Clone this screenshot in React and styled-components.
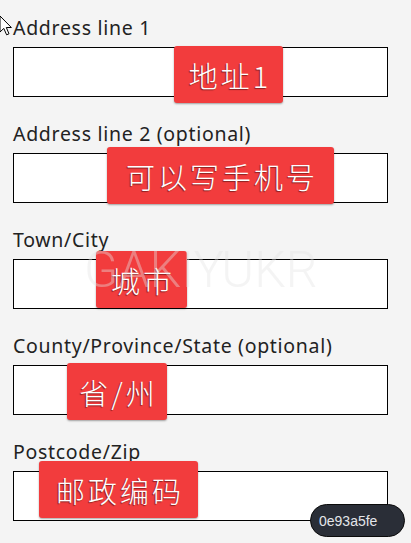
import styled, { createGlobalStyle } from "styled-components";

const GlobalStyle = createGlobalStyle`
  html, body {
    margin: 0;
    padding: 0;
    background: #f4f4f4;
  }
`;

const fields = [
  { label: "Address line 1", tag: "地址1", pos: { left: 161, top: -1, width: 109 } },
  { label: "Address line 2 (optional)", tag: "可以写手机号", pos: { left: 94, top: -6, width: 227 } },
  { label: "Town/City", tag: "城市", pos: { left: 83, top: -8, width: 91 } },
  { label: "County/Province/State (optional)", tag: "省/州", pos: { left: 54, top: -2, width: 100 } },
  { label: "Postcode/Zip", tag: "邮政编码", pos: { left: 26, top: -10, width: 159 } },
];

export default function App() {
  return (
    <Page>
      <GlobalStyle />
      <Cursor width="14" height="22" viewBox="0 0 14 22">
        <path
          d="M1 1 L1 17 L4.8 13.4 L7.6 19.8 L10 18.8 L7.3 12.5 L12.4 12.5 Z"
          fill="#fff"
          stroke="#000"
          strokeWidth="1"
          strokeLinejoin="round"
        />
      </Cursor>
      <Form>
        {fields.map((f) => (
          <Field key={f.label}>
            <Label>{f.label}</Label>
            <InputWrap>
              <Input type="text" />
              <Tag style={f.pos}>{f.tag}</Tag>
            </InputWrap>
          </Field>
        ))}
      </Form>
      <Watermark>GAKIYUKR</Watermark>
      <Hash>0e93a5fe</Hash>
    </Page>
  );
}

const Page = styled.div`
  position: relative;
  width: 411px;
  height: 543px;
  overflow: hidden;
  background: #f4f4f4;
`;

const Form = styled.form`
  display: flex;
  flex-direction: column;
  gap: 22px;
  width: 375px;
  padding: 13px 0 0 13px;
`;

const Field = styled.div`
  display: flex;
  flex-direction: column;
`;

const Label = styled.label`
  font-family: "Noto Sans", "Open Sans", sans-serif;
  font-size: 19.5px;
  letter-spacing: 0.7px;
  line-height: 30px;
  color: #222;
  margin-bottom: 4px;
  white-space: nowrap;
`;

const InputWrap = styled.div`
  position: relative;
`;

const Input = styled.input`
  box-sizing: border-box;
  display: block;
  width: 375px;
  height: 50px;
  margin: 0;
  border: 1px solid #000;
  border-radius: 0;
  background: #fff;
  outline: none;
`;

const Tag = styled.div`
  position: absolute;
  height: 57px;
  display: flex;
  align-items: center;
  justify-content: center;
  background: #f23c3d;
  border-radius: 3px;
  box-shadow: 0 1px 2px rgba(0, 0, 0, 0.35);
  color: #fff;
  font-family: "Noto Sans CJK SC", "Noto Sans", sans-serif;
  font-weight: 300;
  font-size: 29px;
  letter-spacing: 3px;
  text-indent: 3px;
  text-shadow: -1px 1px 1px rgba(0, 0, 0, 0.45);
  white-space: nowrap;
`;

const Watermark = styled.div`
  position: absolute;
  left: 84px;
  top: 240px;
  font-family: Roboto, "Liberation Sans", sans-serif;
  font-weight: 300;
  font-size: 50px;
  line-height: 60px;
  color: rgba(228, 228, 228, 0.4);
  pointer-events: none;
`;

const Hash = styled.div`
  position: absolute;
  left: 310px;
  top: 504px;
  box-sizing: border-box;
  width: 95px;
  height: 33px;
  padding-left: 8px;
  display: flex;
  align-items: center;
  background: #2a2e37;
  border: 1.5px solid #0b0b0b;
  border-radius: 17px;
  color: #e4e6ea;
  font-family: "Liberation Sans", Arial, sans-serif;
  font-size: 14px;
`;

const Cursor = styled.svg`
  position: absolute;
  left: -1px;
  top: 15px;
  z-index: 5;
`;
